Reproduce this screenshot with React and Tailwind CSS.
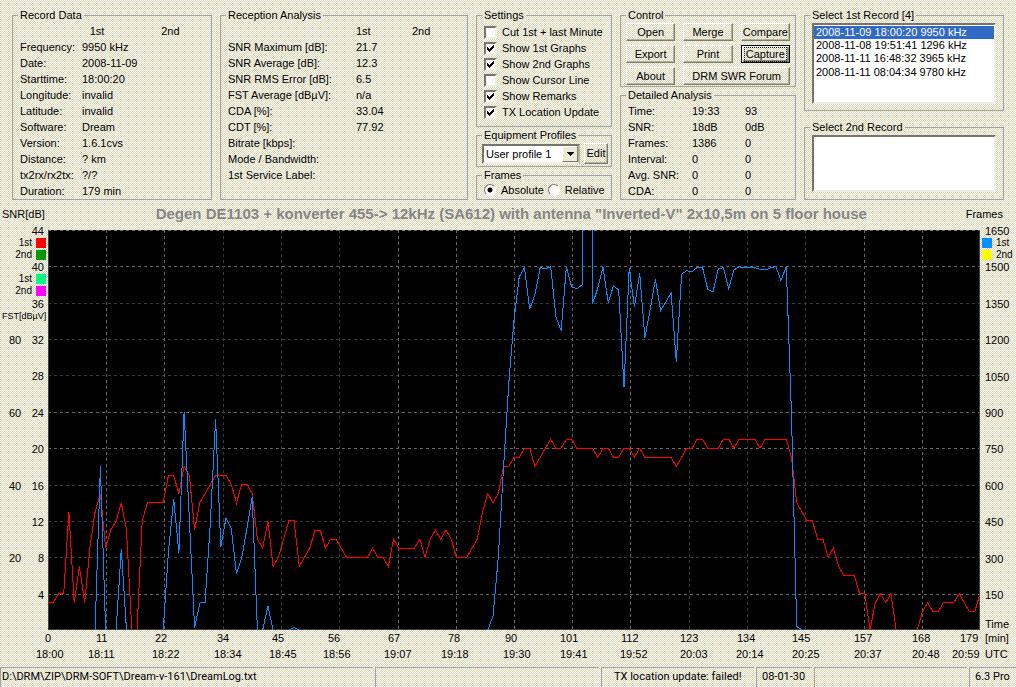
import { useState } from 'react'
import clsx from 'clsx'

const recordData = [
['Frequency:','9950 kHz'],
['Date:','2008-11-09'],
['Starttime:','18:00:20'],
['Longitude:','invalid'],
['Latitude:','invalid'],
['Software:','Dream'],
['Version:','1.6.1cvs'],
['Distance:','? km'],
['tx2rx/rx2tx:','?/?'],
['Duration:','179 min'],
]

const reception = [
['SNR Maximum [dB]:','21.7'],
['SNR Average [dB]:','12.3'],
['SNR RMS Error [dB]:','6.5'],
['FST Average [dBµV]:','n/a'],
['CDA [%]:','33.04'],
['CDT [%]:','77.92'],
['Bitrate [kbps]:',''],
['Mode / Bandwidth:',''],
['1st Service Label:',''],
]

const detailed = [
['Time:','19:33','93'],
['SNR:','18dB','0dB'],
['Frames:','1386','0'],
['Interval:','0','0'],
['Avg. SNR:','0','0'],
['CDA:','0','0'],
]

const settings = [
['Cut 1st + last Minute',false],
['Show 1st Graphs',true],
['Show 2nd Graphs',true],
['Show Cursor Line',false],
['Show Remarks',true],
['TX Location Update',true],
]

const records = [
'2008-11-09 18:00:20 9950 kHz',
'2008-11-08 19:51:41 1296 kHz',
'2008-11-11 16:48:32 3965 kHz',
'2008-11-11 08:04:34 9780 kHz',
]

// one value per minute
const snr = [
3,3,4,4,13,3,7,3,9,13,15,9,11,12,14,11,0,0,12,14,
14,14,14,17,17,15,18,17,11,14,15,16,17,17,17,16,14,16,16,15,
10,9,12,7,8,10,12,12,7,8,9,11,11,9,10,10,9,8,8,8,
8,8,9,8,8,7,10,9,9,9,9,10,8,10,11,10,11,10,8,8,
8,9,10,13,15,14,15,18,18,19,19,20,20,18,19,20,21,20,20,21,
21,20,20,20,20,19,20,20,19,19,20,20,19,20,19,19,19,19,19,19,
18,19,20,20,21,21,20,20,20,21,21,20,21,21,21,21,20,21,21,21,
21,21,19,14,13,12,12,10,10,8,9,7,6,6,6,4,4,0,3,4,
3,4,0,0,0,0,0,2,3,2,2,3,3,3,4,3,2,2,4,
]

const frames = [
0,0,0,0,0,0,0,0,0,0,676,0,0,0,334,0,0,0,0,0,
0,0,0,322,540,318,900,454,8,111,115,441,870,342,462,417,231,297,421,549,
0,0,99,0,0,0,0,10,0,0,0,0,0,0,0,0,0,0,0,0,
0,0,0,0,0,0,0,0,0,0,0,0,0,0,0,0,0,0,0,0,
0,0,0,0,0,59,301,668,1019,1279,1456,1495,1324,1382,1495,1490,1498,1292,1235,1498,
1416,1408,1423,9000,1345,1410,1498,1350,1420,1402,1001,1492,1333,1471,1206,1320,1446,1318,1352,1391,
1107,1468,1482,1478,1496,1496,1405,1394,1489,1495,1408,1485,1498,1495,1495,1495,1487,1485,1494,1500,
1442,1499,887,15,0,0,0,0,0,0,0,0,0,0,0,0,0,0,0,0,
0,0,0,0,0,0,0,0,0,0,0,0,0,0,0,0,0,0,0,
]

// second entry: brighter line
const hGrid = [[36,1],[73,0],[109,0],[145,0],[182,1],[218,1],[255,0],[291,0],[327,0],[364,1]]
const vGrid = [[58,1],[116,1],[175,0],[233,0],[291,0],[350,1],[408,1],[466,1],[524,1],[582,1],[641,0],[699,0],[757,0],[816,1],[874,1]]

const leftAxis = [
['','44'],['','40'],['','36'],['80','32'],['','28'],['60','24'],['','20'],['40','16'],['','12'],['20','8'],['','4'],
]
const rightAxis = [1650,1500,1350,1200,1050,900,750,600,450,300,150]

// label, start of the label along the axis
const minutes = [['0',45],['11',96],['22',155],['34',217],['45',272],['56',328],['67',388],['78',448],['90',505],['101',560],['112',621],['123',680],['134',737],['145',792],['157',854],['168',912],['179',960]]
const times = [['18:00',36],['18:11',88],['18:22',152],['18:34',214],['18:45',269],['18:56',323],['19:07',384],['19:18',441],['19:30',503],['19:41',560],['19:52',620],['20:03',680],['20:14',736],['20:25',792],['20:37',854],['20:48',912],['20:59',952]]

const points = (data,max) => data.map((v,i) => `${(i*932/(data.length-1)).toFixed(1)},${(400-v*400/max).toFixed(1)}`).join(' ')

function Group({title,className,children}){
return (
<fieldset className={clsx('min-w-0 border border-[#a2a2a2]',className)}>
<legend className="ml-[5px] h-4 px-[2px] leading-4">{title}</legend>
{children}
</fieldset>
)
}

function Btn({children,className,active}){
return (
<button className={clsx('h-[18px] whitespace-nowrap border text-center leading-[15px]',
active ? 'border-black shadow-[inset_1px_1px_#fff,inset_-2px_-2px_#8f8d7c]' : 'border-t-white border-l-white border-r-[#7f7d6c] border-b-[#7f7d6c] shadow-[inset_-1px_-1px_#b5b29c]',className)}>
{active ? <span className="block mx-[2px] outline-1 outline-dotted outline-black -outline-offset-1">{children}</span> : children}
</button>
)
}

function Check({label,initial}){
const [on,setOn] = useState(initial)
return (
<label className="flex h-4 items-center gap-[5px] whitespace-nowrap">
<span className="grid">
<input type="checkbox" checked={on} onChange={e=>setOn(e.target.checked)} className="col-start-1 row-start-1 size-[13px] appearance-none border-2 border-t-[#77756a] border-l-[#77756a] border-r-[#f1efe2] border-b-[#f1efe2] bg-white"/>
{on && (
<svg viewBox="0 0 13 13" className="pointer-events-none col-start-1 row-start-1 size-[13px]" shapeRendering="crispEdges">
<path d="M3 5h1v1h1v1h1v-1h1v-1h1v-1h1v-1h1v3h-1v1h-1v1h-1v1h-1v1h-1v-1h-1v-1h-1z" fill="#000"/>
</svg>
)}
</span>
{label}
</label>
)
}

function Radio({label,checked,onChange}){
return (
<label className="flex items-center gap-[5px]">
<input type="radio" name="frames" checked={checked} onChange={onChange} className="size-3 appearance-none rounded-full border border-t-[#77756a] border-l-[#77756a] border-r-white border-b-white bg-white checked:bg-[radial-gradient(circle,#000_2px,#fff_3px)]"/>
{label}
</label>
)
}

function ListBox({label,items,className}){
return (
<select size={4} aria-label={label} defaultValue={items[0]} className={clsx('mx-[7px] block overflow-hidden border-2 border-t-[#77756a] border-l-[#77756a] border-r-[#f1efe2] border-b-[#f1efe2] bg-white p-0 outline-none',className)}>
{items.map(r => <option key={r} className="h-[13px] px-[2px] py-0 leading-[13px] text-black checked:bg-[linear-gradient(#316ac5,#316ac5)] checked:text-white!">{r}</option>)}
</select>
)
}

function Legend({label,color,right}){
return (
<div className={clsx('flex h-3 items-center gap-1 text-[10px]',right ? 'flex-row-reverse justify-end pl-[2px]' : 'justify-end pr-[2px]')}>
{label}<span className={clsx('size-[10px]',color)}/>
</div>
)
}

function AxisRow({labels,unit}){
return (
<div className="flex h-4 leading-4">
<div className="flex min-w-0 flex-1" style={{paddingLeft:labels[0][1]}}>
{labels.map(([t,x],i) => (
<span key={t} className="min-w-0 whitespace-nowrap" style={{flex:`${(i+1<labels.length ? labels[i+1][1] : 985)-x} 0 0px`}}>{t}</span>
))}
</div>
<span className="w-[31px]">{unit}</span>
</div>
)
}

function Chart(){
return (
<svg viewBox="0 0 932 400" preserveAspectRatio="none" className="mt-[5px] h-[400px] min-w-0 flex-1 bg-black" shapeRendering="crispEdges" fill="none">
{hGrid.map(([y,b]) => <path key={y} d={`M0 ${y}.5H932`} stroke={b ? '#666666' : '#383838'} strokeDasharray="3 3"/>)}
{vGrid.map(([x,b]) => <path key={x} d={`M${x}.5 0V400`} stroke={b ? '#666666' : '#383838'} strokeDasharray="3 3"/>)}
<path d="M0 .5H932" stroke="#666666" strokeDasharray="3 3"/>
<path d="M.5 0V399.5H931.5V0" stroke="#404040"/>
<polyline points={points(snr,44)} stroke="#ff0000"/>
<polyline points={points(frames,1650)} stroke="#0090ff"/>
</svg>
)
}

function Panel({children,className}){
return <div className={clsx('h-5 border-t border-l border-[#a2a2a2] leading-[18px] whitespace-nowrap',className)}>{children}</div>
}

export default function App(){
const [mode,setMode] = useState('abs')

return (
<div className="flex min-h-screen w-full flex-col bg-[conic-gradient(from_90deg_at_3px_3px,#ffd6cc_25%,transparent_0),conic-gradient(#d6d3c8_25%,#ffffcc_0_50%,#d6d3c8_0_75%,#ffffff_0)] bg-[size:4px_4px,2px_2px] bg-[position:0_-1px,0_0] font-['Liberation_Sans',Arial,sans-serif] text-[11px] text-black">

<div className="grid grid-cols-[minmax(0,200fr)_minmax(0,248fr)_minmax(0,136fr)_minmax(0,176fr)_minmax(0,200fr)] gap-2 px-3 pt-[7px]">
<Group title="Record Data">
<div className="grid h-4 grid-cols-[70fr_72fr_50fr] pl-[7px] leading-4"><span/><span>1st</span><span>2nd</span></div>
{recordData.map(([k,v]) => (
<div key={k} className="flex h-4 pl-[7px] leading-4"><span className="w-[62px]">{k}</span><span>{v}</span></div>
))}
</Group>

<Group title="Reception Analysis">
<div className="flex h-4 pl-[7px] leading-4"><span className="w-32"/><span className="w-14">1st</span><span>2nd</span></div>
{reception.map(([k,v]) => (
<div key={k} className="flex h-4 pl-[7px] leading-4"><span className="w-32">{k}</span><span>{v}</span></div>
))}
</Group>

<div className="flex flex-col">
<Group title="Settings" className="h-[120px]">
<div className="pl-[7px] pt-[1px]">
{settings.map(([l,v]) => <Check key={l} label={l} initial={v}/>)}
</div>
</Group>
<Group title="Equipment Profiles" className="h-10">
<div className="flex items-center justify-between pl-[5px] pr-[3px]">
<div className="grid h-5 w-[98px] border-2 border-t-[#77756a] border-l-[#77756a] border-r-[#b5b29c] border-b-[#f1efe2]">
<select aria-label="Equipment profile" className="col-start-1 row-start-1 appearance-none bg-white pl-[2px] outline-none">
<option>User profile 1</option>
</select>
<span className="pointer-events-none col-start-1 row-start-1 grid w-4 place-items-center justify-self-end border border-t-white border-l-white border-r-[#7f7d6c] border-b-[#7f7d6c] bg-[#ece9d8]">
<svg viewBox="0 0 7 4" className="h-1 w-[7px]" shapeRendering="crispEdges"><path d="M0 0h7L3.5 4z"/></svg>
</span>
</div>
<button className="h-[21px] w-6 border border-t-white border-l-white border-r-[#7f7d6c] border-b-[#7f7d6c] shadow-[inset_-1px_-1px_#b5b29c]">Edit</button>
</div>
</Group>
<Group title="Frames" className="h-[33px]">
<div className="flex h-[14px] items-center gap-1 pl-[7px] whitespace-nowrap">
<Radio label="Absolute" checked={mode==='abs'} onChange={()=>setMode('abs')}/>
<Radio label="Relative" checked={mode==='rel'} onChange={()=>setMode('rel')}/>
</div>
</Group>
</div>

<div className="flex flex-col">
<Group title="Control" className="h-20">
<div className="grid grid-cols-3 gap-x-2 gap-y-1 px-[5px]">
<Btn>Open</Btn><Btn>Merge</Btn><Btn>Compare</Btn>
<Btn>Export</Btn><Btn>Print</Btn><Btn active>Capture</Btn>
<Btn>About</Btn><Btn className="col-span-2">DRM SWR Forum</Btn>
</div>
</Group>
<Group title="Detailed Analysis" className="h-[113px]">
{detailed.map(([k,a,b]) => (
<div key={k} className="flex h-4 pl-[7px] leading-4"><span className="w-16">{k}</span><span className="w-[53px]">{a}</span><span>{b}</span></div>
))}
</Group>
</div>

<div className="flex flex-col gap-2">
<Group title="Select 1st Record [4]" className="h-[104px]">
<ListBox label="Select 1st Record" items={records} className="h-[81px] w-[calc(100%-14px)] pt-px"/>
</Group>
<Group title="Select 2nd Record" className="h-[81px]">
<ListBox label="Select 2nd Record" items={[]} className="h-[57px] w-[calc(100%-14px)]"/>
</Group>
</div>
</div>

<div className="flex h-[25px] items-center justify-between pt-1 pl-[2px] pr-[13px]">
<span>SNR[dB]</span>
<h1 className="pl-3 text-[15px] font-bold whitespace-nowrap text-[#868686]">Degen DE1103 + konverter 455-&gt; 12kHz (SA612) with antenna "Inverted-V" 2x10,5m on 5 floor house</h1>
<span>Frames</span>
</div>

<div className="flex">
<div className="flex h-[400px] w-12 flex-col leading-3">
{leftAxis.map(([f,s],i) => (
<div key={s} className="min-h-0 flex-1">
<div className="flex h-3 justify-between pr-1 pl-[9px]"><span>{f}</span><span>{s}</span></div>
{i===0 && <><Legend label="1st" color="bg-[#ff0000]"/><Legend label="2nd" color="bg-[#009900]"/></>}
{i===1 && <><Legend label="1st" color="bg-[#00ff80]"/><Legend label="2nd" color="bg-[#ff00ff]"/></>}
{i===2 && <div className="pl-[2px] text-[9px]">FST[dBµV]</div>}
</div>
))}
</div>
<Chart/>
<div className="flex h-[405px] w-9 flex-col leading-3">
{rightAxis.map((v,i) => (
<div key={v} className={i===10 ? 'flex h-[41px] flex-col justify-between' : 'min-h-0 flex-1'}>
<div className="h-3 pl-[5px]">{v}</div>
{i===0 && <><Legend right label="1st" color="bg-[#0090ff]"/><Legend right label="2nd" color="bg-[#ffff00]"/></>}
{i===10 && <div className="pl-[5px]">Time</div>}
</div>
))}
</div>
</div>

<AxisRow labels={minutes} unit="[min]"/>
<AxisRow labels={times} unit="UTC"/>

<footer className="mt-auto flex gap-[2px] pt-[3px] font-['Roboto','Noto_Sans',sans-serif] text-[11px]">
<Panel className="flex-[373] pl-[1px]">D:\DRM\ZIP\DRM-SOFT\Dream-v-161\DreamLog.txt</Panel>
<Panel className="flex-[225]"/>
<Panel className="w-[153px] pl-3">TX location update: failed!</Panel>
<Panel className="w-14 pl-[5px]">08-01-30</Panel>
<Panel className="w-[153px]"/>
<Panel className="w-[47px] pl-[5px]">6.3 Pro</Panel>
</footer>
</div>
)
}
